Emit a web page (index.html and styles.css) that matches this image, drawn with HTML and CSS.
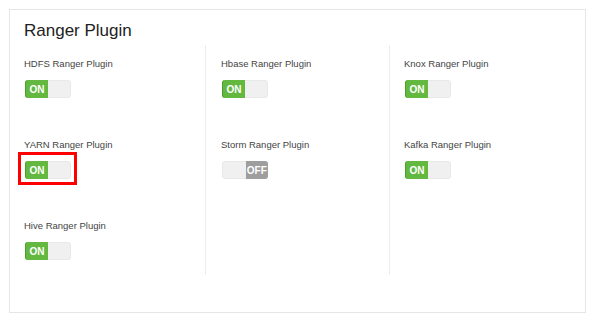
FILE: index.html
```html
<!DOCTYPE html>
<html lang="en">
<head>
  <meta charset="UTF-8">
  <title>Ranger Plugin</title>
  <link rel="stylesheet" href="styles.css">
</head>
<body>

  <div class="panel">
    <h2 class="panel-title">Ranger Plugin</h2>

    <div class="plugins">
      <div class="col">
        <div class="plugin">
          <div class="plugin-label">HDFS Ranger Plugin</div>
          <div class="switch on"><span class="knob">ON</span><span class="blank"></span></div>
        </div>
        <div class="plugin">
          <div class="plugin-label">YARN Ranger Plugin</div>
          <div class="switch on highlighted"><span class="knob">ON</span><span class="blank"></span></div>
        </div>
        <div class="plugin">
          <div class="plugin-label">Hive Ranger Plugin</div>
          <div class="switch on"><span class="knob">ON</span><span class="blank"></span></div>
        </div>
      </div>

      <div class="col">
        <div class="plugin">
          <div class="plugin-label">Hbase Ranger Plugin</div>
          <div class="switch on"><span class="knob">ON</span><span class="blank"></span></div>
        </div>
        <div class="plugin">
          <div class="plugin-label">Storm Ranger Plugin</div>
          <div class="switch off"><span class="blank"></span><span class="knob">OFF</span></div>
        </div>
      </div>

      <div class="col">
        <div class="plugin">
          <div class="plugin-label">Knox Ranger Plugin</div>
          <div class="switch on"><span class="knob">ON</span><span class="blank"></span></div>
        </div>
        <div class="plugin">
          <div class="plugin-label">Kafka Ranger Plugin</div>
          <div class="switch on"><span class="knob">ON</span><span class="blank"></span></div>
        </div>
      </div>
    </div>
  </div>

</body>
</html>
```

FILE: styles.css
```css
body {
  font-family: 'Liberation Sans', Arial, sans-serif;
  background-color: #fff;
  margin: 0;
  padding: 0;
}
.panel {
  margin: 9px 0 0 9px;
  width: 577px;
  height: 304px;
  box-sizing: border-box;
  border: 1px solid #e6e6e6;
  padding-top: 11px;
}
.panel-title {
  margin: 0 0 4px 14px;
  font-size: 17px;
  line-height: 20px;
  font-weight: normal;
  color: #222;
}
.plugins {
  display: grid;
  grid-template-columns: 195px 184px 1fr;
  grid-template-rows: 230px;
}
.col {
  padding: 13px 0 0 14px;
}
.col + .col {
  border-left: 1px solid #ececec;
}
.col:nth-child(2) {
  padding-left: 15px;
}
.plugin {
  height: 81px;
}
.plugin:last-child {
  height: auto;
}
.plugin-label {
  font-size: 9.5px;
  line-height: 12px;
  color: #444;
  margin-bottom: 10px;
}
.switch {
  position: relative;
  display: flex;
  width: 46px;
  height: 18px;
  margin-left: 1px;
  box-sizing: border-box;
  border: 1px solid #e8e8e8;
  border-radius: 3px;
  background: #f0f0f0;
}
.switch .knob,
.switch .blank {
  flex: 1;
  display: flex;
  align-items: center;
  justify-content: center;
  font-size: 10px;
  font-weight: bold;
  color: #fff;
}
.switch.on .knob {
  background: #63b83f;
  margin: -1px 0 -1px -1px;
  border-radius: 3px 0 0 3px;
  border-left: 1px solid #4f9d2e;
}
.switch.off .knob {
  background: #9e9e9e;
  margin: -1px -1px -1px 0;
  border-radius: 0 3px 3px 0;
}
.highlighted::after {
  content: '';
  position: absolute;
  left: -8px;
  top: -10px;
  width: 59px;
  height: 33px;
  box-sizing: border-box;
  border: 3px solid #f00;
}
```
